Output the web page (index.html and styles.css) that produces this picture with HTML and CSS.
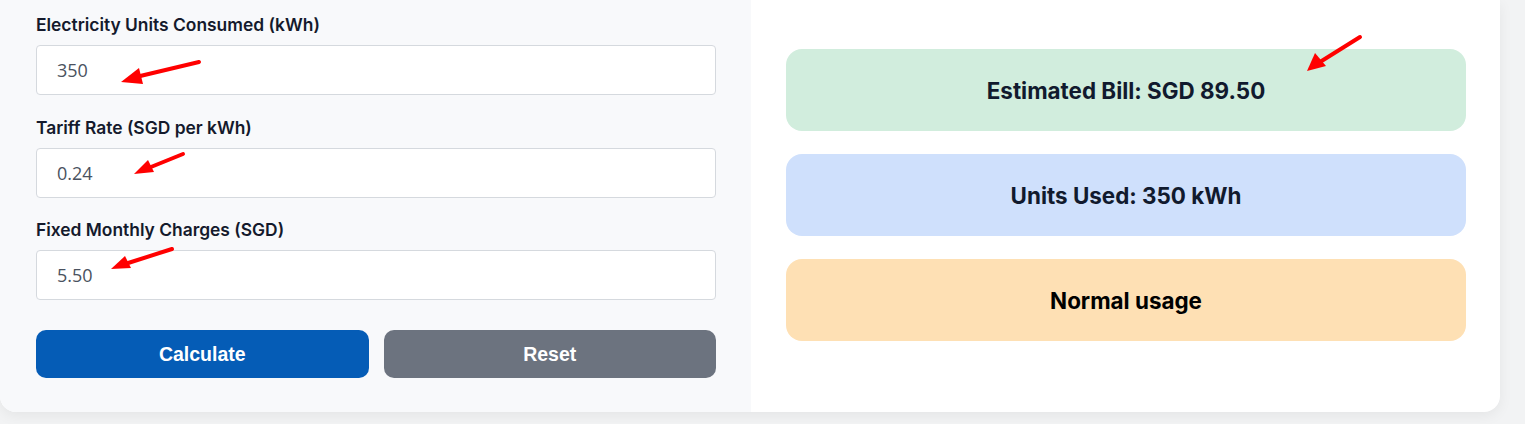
FILE: index.html
```html
<!DOCTYPE html>
<html lang="en">
<head>
<meta charset="utf-8">
<title>Electricity Bill Calculator</title>
<link rel="stylesheet" href="styles.css">
</head>
<body>
<div class="card">
  <div class="form-panel">
    <div class="field">
      <label class="label" for="units">Electricity Units Consumed (kWh)</label>
      <input class="input" id="units" type="text" value="350">
    </div>
    <div class="field">
      <label class="label" for="rate">Tariff Rate (SGD per kWh)</label>
      <input class="input" id="rate" type="text" value="0.24">
    </div>
    <div class="field">
      <label class="label" for="fixed">Fixed Monthly Charges (SGD)</label>
      <input class="input" id="fixed" type="text" value="5.50">
    </div>
    <div class="buttons">
      <button class="btn btn-primary" type="button">Calculate</button>
      <button class="btn btn-secondary" type="button">Reset</button>
    </div>
  </div>
  <div class="result-panel">
    <div class="result result-green">Estimated Bill: SGD 89.50</div>
    <div class="result result-blue">Units Used: 350 kWh</div>
    <div class="result result-orange">Normal usage</div>
  </div>
</div>
<svg class="annotations" width="1525" height="424" viewBox="0 0 1525 424" aria-hidden="true">
  <g stroke="#ff0000" stroke-width="4" stroke-linecap="round" fill="#ff0000">
    <line x1="199" y1="62" x2="136" y2="77"/>
    <line x1="183" y1="154" x2="146" y2="169"/>
    <line x1="172" y1="249" x2="125" y2="264"/>
    <line x1="1360" y1="37" x2="1320" y2="62"/>
  </g>
  <g fill="#ff0000">
    <polygon points="121,82 139,68 143,84"/>
    <polygon points="134,174 148,160 154,172"/>
    <polygon points="111,269 125,256 131,268"/>
    <polygon points="1307,71 1315,53 1326,66"/>
  </g>
</svg>
</body>
</html>
```
FILE: styles.css
```css
html, body {
  margin: 0;
  padding: 0;
}
body {
  background: #f2f3f4;
  width: 1525px;
  height: 424px;
  overflow: hidden;
  position: relative;
}
.card {
  display: flex;
  width: 1500px;
  height: 412px;
  background: #ffffff;
  border-radius: 0 0 16px 16px;
  box-shadow: 0 4px 14px rgba(0, 0, 0, 0.06);
  overflow: hidden;
}
.form-panel {
  width: 751px;
  box-sizing: border-box;
  background: #f8f9fb;
  padding: 14px 35px 34px 36px;
  display: flex;
  flex-direction: column;
}
.field {
  display: flex;
  flex-direction: column;
  margin-bottom: 21.5px;
}
.label {
  font-family: Inter, "Noto Sans", sans-serif;
  font-weight: 600;
  font-size: 17.4px;
  line-height: 22px;
  color: #141a2c;
  margin-bottom: 9px;
}
.input {
  box-sizing: border-box;
  height: 50px;
  width: 680px;
  border: 1px solid #d5d9de;
  border-radius: 4px;
  background: #ffffff;
  padding: 0 20px;
  font-family: "Open Sans", "Noto Sans", sans-serif;
  font-size: 18px;
  color: #4a5260;
  outline: none;
}
.buttons {
  display: flex;
  gap: 15px;
  margin-top: 8.5px;
}
.btn {
  flex: 1;
  height: 48px;
  border: none;
  border-radius: 10px;
  font-family: "Liberation Sans", Arial, sans-serif;
  font-weight: 700;
  font-size: 19.5px;
  color: #ffffff;
}
.btn-primary {
  background: #055cb6;
}
.btn-secondary {
  background: #6c737f;
}
.result-panel {
  flex: 1;
  padding: 49px 34px 0 35px;
  display: flex;
  flex-direction: column;
  gap: 23px;
}
.result {
  height: 82px;
  border-radius: 16px;
  display: flex;
  align-items: center;
  justify-content: center;
  font-family: Inter, "Noto Sans", sans-serif;
  font-weight: 700;
  font-size: 22.4px;
  color: #111a2e;
}
.result-green {
  background: #d1eddd;
}
.result-blue {
  background: #cfe0fc;
}
.result-orange {
  background: #fee0b4;
  color: #000000;
}
.annotations {
  position: absolute;
  left: 0;
  top: 0;
  pointer-events: none;
}
```
